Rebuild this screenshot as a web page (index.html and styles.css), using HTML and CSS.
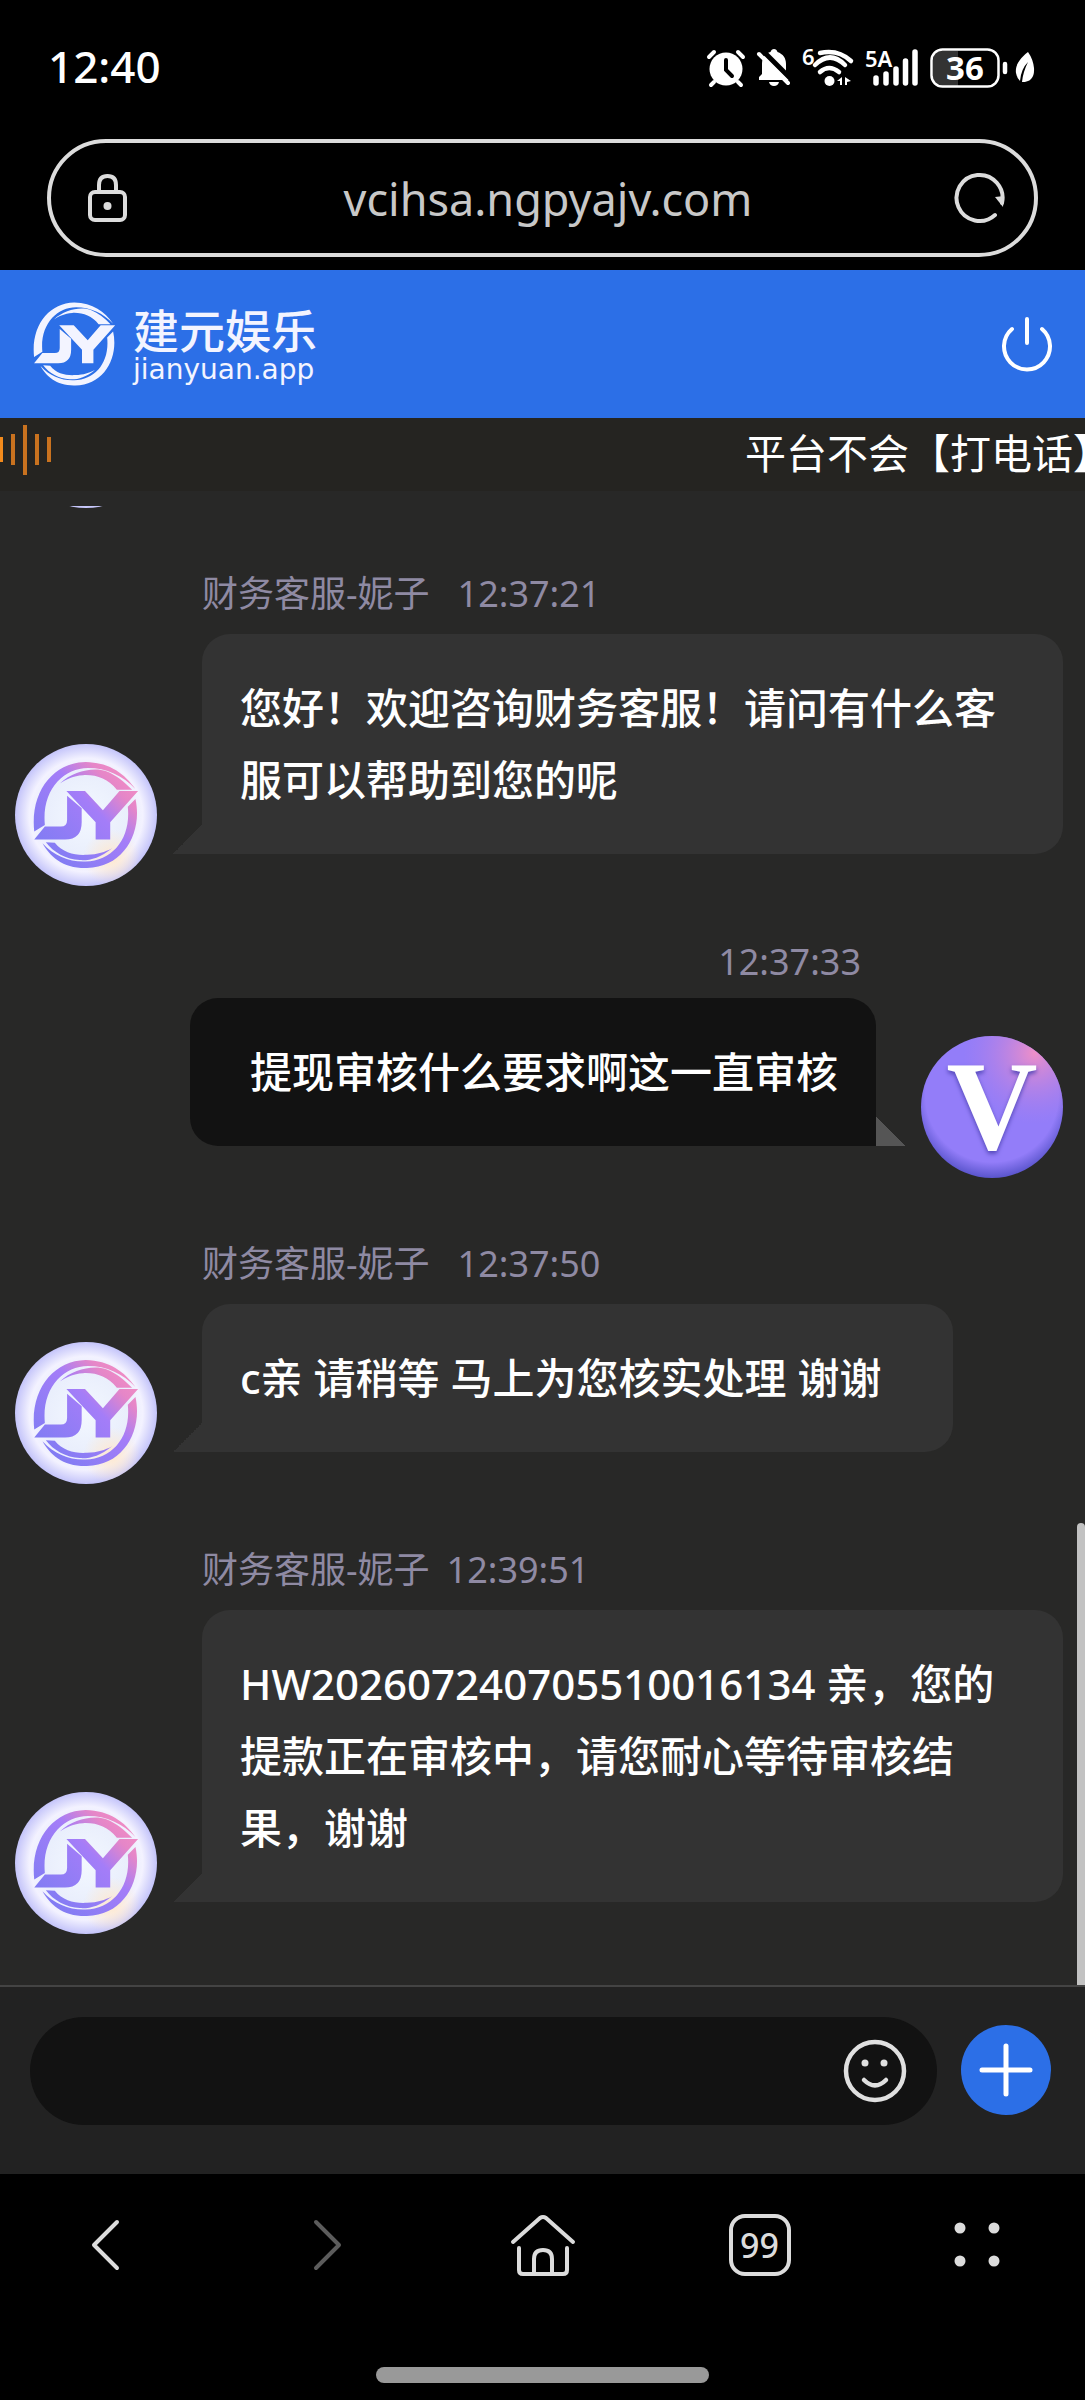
FILE: index.html
```html
<!DOCTYPE html>
<html lang="zh-CN">
<head>
<meta charset="utf-8">
<meta name="viewport" content="width=device-width, initial-scale=1">
<title>建元娱乐</title>
<link rel="stylesheet" href="styles.css">
</head>
<body>
<svg class="defs" width="0" height="0" aria-hidden="true">
  <defs>
    <linearGradient id="mark-fill" gradientUnits="userSpaceOnUse" x1="140" y1="380" x2="390" y2="140">
      <stop offset="0" stop-color="#7f7cf3"/>
      <stop offset=".6" stop-color="#a47df8"/>
      <stop offset=".85" stop-color="#e586c8"/>
      <stop offset="1" stop-color="#f08cc4"/>
    </linearGradient>
    <radialGradient id="pearl">
      <stop offset="0" stop-color="#f3f8ff"/>
      <stop offset=".6" stop-color="#e9eefc"/>
      <stop offset=".8" stop-color="#f3f2ff"/>
      <stop offset="1" stop-color="#c4c4fa"/>
    </radialGradient>
    <radialGradient id="warm" cx=".68" cy=".8" r=".2">
      <stop offset="0" stop-color="#ffe9cf"/>
      <stop offset="1" stop-color="#ffe9cf" stop-opacity="0"/>
    </radialGradient>
    <radialGradient id="violet" cx=".5" cy=".42" r=".6">
      <stop offset=".78" stop-color="#937df9"/>
      <stop offset="1" stop-color="#4f4dc4"/>
    </radialGradient>
    <radialGradient id="blush" cx=".8" cy=".12" r=".5">
      <stop offset="0" stop-color="#ee8fc8"/>
      <stop offset="1" stop-color="#b07fe8" stop-opacity="0"/>
    </radialGradient>
    <symbol id="mark" viewBox="95 82 328 336">
      <path d="M103 300C90 180 160 92 258 90c72 2 117 35 150 82-38-42-88-64-143-64-75 0-140 67-130 172z"/>
      <path d="M180 155c40-37 100-50 140-37 30 12 55 32 78 56h-46c-27-34-62-46-102-44-30 2-50 12-70 25z"/>
      <path d="M408 202c22 98-33 206-146 208-72 2-112-35-134-75 37 40 82 57 130 55 82-2 137-70 127-165z"/>
      <path d="M138 332l27 2c25 31 60 38 97 36 33-2 53-8 76-20-38 30-68 38-98 36-40-2-80-24-102-54z"/>
      <path d="M202 192l44 38v42q0 52-50 52h-93l32-39h48q19 0 19-20z"/>
      <path d="M200 178h56l54 58 50-58h56l-84 94v52h-44v-52z"/>
    </symbol>
    <symbol id="agent" viewBox="0 0 428 428">
      <circle cx="214" cy="214" r="214" fill="url(#pearl)"/>
      <circle cx="214" cy="214" r="214" fill="url(#warm)"/>
      <use href="#mark" x="50" y="46" width="328" height="336"/>
    </symbol>
  </defs>
</svg>

<div class="phone">
  <div class="status">
    <span class="clock">12:40</span>
    <div class="status-icons">
      <svg width="40" height="40" viewBox="0 0 40 40" fill="none" stroke="#fff" stroke-linecap="round">
        <circle cx="20" cy="21" r="16.500" fill="#fff" stroke="none"/>
        <path d="M3 9l5-5M37 9l-5-5M8 34l-3 3M32 34l3 3" stroke-width="4"/>
        <path d="M20 12v10l6 6" stroke="#000" stroke-width="4"/>
      </svg>
      <svg width="34" height="40" viewBox="0 0 34 40">
        <path d="M17 1c1.500 0 3 1 3.500 3C26 6 29 10 29 16v11l4 5H2v-3l3-3V16C5 9 9 5 13.500 4 14 2 15.500 1 17 1zM12 34h10q-1 4-5 4t-5-4z" fill="#fff"/>
        <path d="M5 2l29 29" stroke="#000" stroke-width="5"/>
        <path d="M2 6l29 29" stroke="#fff" stroke-width="4" stroke-linecap="round"/>
      </svg>
      <svg width="52" height="40" viewBox="0 0 52 40" fill="none" stroke="#fff" stroke-linecap="round">
        <text x="0" y="17" class="tiny">6</text>
        <path d="M18 5q18-4 31 8M13 17q15-15 30 0M18 24q9-8 19 0" stroke-width="4.500"/>
        <circle cx="27.500" cy="33" r="5" fill="#fff" stroke="none"/>
        <path d="M40 29v8h-2v-4h-3zM43 37v-8l6 4-4 1v3z" fill="#fff" stroke="none"/>
      </svg>
      <svg width="54" height="40" viewBox="0 0 54 40" fill="none" stroke="#fff" stroke-linecap="round">
        <text x="0" y="19" class="tiny">5A</text>
        <path d="M11 30v5M21 26v9M31 21v14M40.500 13v22M50 4v31" stroke-width="5.500"/>
      </svg>
      <svg width="78" height="40" viewBox="0 0 78 40">
        <path d="M12 3h16v35H12q-9 0-9-9V12q0-9 9-9z" fill="#333"/>
        <rect x="1.500" y="1.500" width="67" height="37" rx="11" fill="none" stroke="#fff" stroke-width="2.500"/>
        <path d="M75 16v8" stroke="#fff" stroke-width="4.500" stroke-linecap="round"/>
        <text x="35" y="32" text-anchor="middle" class="charge">36</text>
      </svg>
      <svg class="leaf" width="20" height="34" viewBox="0 0 20 34">
        <path d="M13 1C4 8 0 15 1 22q1 5 4 8 1-12 8-19-5 10-6 20 13 0 12-14Q18 8 13 1z" fill="#fff"/>
      </svg>
    </div>
  </div>

  <div class="address">
    <svg width="40" height="50" viewBox="0 0 40 50" fill="none" stroke="#dcdcdc" stroke-width="4">
      <rect x="2" y="19" width="35" height="28" rx="5"/>
      <path d="M11 18v-6q0-9 8.500-9T28 12v6"/>
      <circle cx="19.500" cy="33" r="4" fill="#dcdcdc" stroke="none"/>
    </svg>
    <span class="url">vcihsa.ngpyajv.com</span>
    <button class="plain" aria-label="刷新">
      <svg width="52" height="52" viewBox="0 0 52 52" fill="none" stroke="#dcdcdc" stroke-width="4">
        <path d="M41 43A23 23 0 1 1 48 31" stroke-linecap="round"/>
        <path d="M41 25l9-1-1 11z" fill="#dcdcdc" stroke="none"/>
      </svg>
    </button>
  </div>

  <header class="brand">
    <svg class="brand-mark" viewBox="95 82 328 336"><use href="#mark" x="95" y="82" width="328" height="336"/></svg>
    <div class="brand-text">
      <span class="brand-name">建元娱乐</span>
      <span class="brand-host">jianyuan.app</span>
    </div>
    <button class="plain power" aria-label="退出">
      <svg width="52" height="56" viewBox="0 0 52 56" fill="none" stroke="#fff" stroke-width="4" stroke-linecap="round">
        <path d="M11 13A23 23 0 1 0 41 13M26 3v24"/>
      </svg>
    </button>
  </header>

  <div class="notice">
    <svg width="52" height="52" viewBox="0 0 52 52" fill="#c9721f">
      <path d="M0 14h3v25H0z" fill="#f28a1c"/>
      <path d="M11 11h4v31h-4zM23 2h4v50h-4zM35 11h4v31h-4zM47 14h4v25h-4z"/>
    </svg>
    <span class="ticker">平台不会【打电话】</span>
  </div>

  <main class="chat">
    <div class="passed"><svg class="avatar"><use href="#agent"/></svg></div>

    <article class="msg">
      <p class="meta"><span>财务客服-妮子</span><time>12:37:21</time></p>
      <svg class="avatar"><use href="#agent"/></svg>
      <p class="bubble">您好！欢迎咨询财务客服！请问有什么客服可以帮助到您的呢</p>
    </article>

    <article class="msg mine">
      <p class="meta"><time>12:37:33</time></p>
      <p class="bubble">提现审核什么要求啊这一直审核</p>
      <svg class="avatar" viewBox="0 0 428 428">
        <circle cx="214" cy="214" r="214" fill="url(#violet)"/>
        <circle cx="214" cy="214" r="214" fill="url(#blush)"/>
        <text x="214" y="342" text-anchor="middle" class="initial">V</text>
      </svg>
    </article>

    <article class="msg roomy">
      <p class="meta"><span>财务客服-妮子</span><time>12:37:50</time></p>
      <svg class="avatar"><use href="#agent"/></svg>
      <p class="bubble">c亲 请稍等 马上为您核实处理 谢谢</p>
    </article>

    <article class="msg recent">
      <p class="meta"><span>财务客服-妮子</span><time>12:39:51</time></p>
      <svg class="avatar"><use href="#agent"/></svg>
      <p class="bubble">HW202607240705510016134 亲，您的提款正在审核中，请您耐心等待审核结果，谢谢</p>
    </article>
    <div class="thumb"></div>
  </main>

  <form class="composer">
    <div class="field">
      <input type="text" aria-label="消息">
      <button type="button" class="plain" aria-label="表情">
        <svg width="64" height="64" viewBox="0 0 64 64" fill="none" stroke="#e0e0e0" stroke-width="4.500" stroke-linecap="round">
          <circle cx="32" cy="32" r="29"/>
          <path d="M21 41q11 11 22 0"/>
          <circle cx="22" cy="24" r="3.500" fill="#e0e0e0" stroke="none"/>
          <circle cx="41" cy="24" r="3.500" fill="#e0e0e0" stroke="none"/>
        </svg>
      </button>
    </div>
    <button type="button" class="add" aria-label="更多">
      <svg width="54" height="54" viewBox="0 0 54 54" stroke="#fff" stroke-width="5" stroke-linecap="round"><path d="M27 3v48M3 27h48"/></svg>
    </button>
  </form>

  <nav class="toolbar">
    <button class="plain" aria-label="后退">
      <svg width="64" height="64" viewBox="0 0 64 64" fill="none" stroke="#dcdcdc" stroke-width="4" stroke-linecap="round" stroke-linejoin="round"><path d="M40 9L17 32l23 23"/></svg>
    </button>
    <button class="plain" aria-label="前进">
      <svg width="64" height="64" viewBox="0 0 64 64" fill="none" stroke="#5c5c5c" stroke-width="4" stroke-linecap="round" stroke-linejoin="round"><path d="M22 9l23 23-23 23"/></svg>
    </button>
    <button class="plain" aria-label="主页">
      <svg width="68" height="64" viewBox="0 0 68 64" fill="none" stroke="#dcdcdc" stroke-width="4" stroke-linecap="round" stroke-linejoin="round">
        <path d="M4 29L31 5q3-2 6 0l27 24"/>
        <path d="M10 35v22q0 4 4 4h40q4 0 4-4V35M25 60V46q0-9 9-9t9 9v14"/>
      </svg>
    </button>
    <button class="tabs" aria-label="标签页">99</button>
    <button class="plain" aria-label="菜单">
      <svg width="64" height="64" viewBox="0 0 64 64" fill="#dcdcdc">
        <circle cx="15" cy="15" r="5.500"/><circle cx="49" cy="15" r="5.500"/><circle cx="15" cy="48" r="5.500"/><circle cx="49" cy="48" r="5.500"/>
      </svg>
    </button>
  </nav>
  <div class="gesture"></div>
</div>
</body>
</html>
```
FILE: styles.css
```css
* {
  box-sizing: border-box;
}

body {
  margin: 0;
  background: #000;
  color: #fff;
  font-family: "Noto Sans", "Noto Sans CJK SC", sans-serif;
}

p {
  margin: 0;
}

button {
  padding: 0;
  border: 0;
  font: inherit;
  color: inherit;
}

svg {
  display: block;
  flex: none;
}

.defs {
  position: absolute;
}

.plain {
  background: none;
}

.phone {
  display: flex;
  flex-direction: column;
  min-height: 100vh;
}

/* system status */
.status {
  display: flex;
  align-items: center;
  justify-content: space-between;
  height: 136px;
  padding: 0 50px 0 48px;
}

.clock {
  padding-bottom: 4px;
  font-size: 44px;
  font-weight: 500;
}

.status-icons {
  display: flex;
  align-items: center;
  gap: 11px;
}

.status-icons svg {
  overflow: visible;
}

.status-icons .leaf {
  margin-left: -4px;
}

.tiny {
  fill: #fff;
  stroke: none;
  font: 600 22px "Noto Sans", sans-serif;
}

.charge {
  fill: #fff;
  font: 700 33px "Noto Sans", sans-serif;
}

/* browser address */
.address {
  display: flex;
  align-items: center;
  height: 118px;
  margin: 3px 47px 13px;
  padding: 0 28px 0 37px;
  border: 4px solid #dcdcdc;
  border-radius: 59px;
}

.url {
  flex: 1;
  padding-left: 14px;
  color: #c8c8c8;
  font-size: 45px;
  text-align: center;
}

/* site header */
.brand {
  display: flex;
  align-items: center;
  height: 148px;
  padding: 0 32px;
  background: #2c6fe7;
}

.brand-mark {
  width: 85px;
  height: 88px;
  fill: #f3f4ff;
}

.brand-text {
  display: flex;
  flex-direction: column;
  margin-left: 16px;
}

.brand-name {
  font: 500 46px/52px "Noto Sans CJK SC", sans-serif;
  color: #f3f4ff;
}

.brand-host {
  font: 28px/32px "DejaVu Sans", sans-serif;
  color: #f3f4ff;
}

.power {
  margin-left: auto;
}

.notice {
  display: flex;
  justify-content: space-between;
  height: 73px;
  padding-top: 5px;
  background: #252421;
  overflow: hidden;
}

.ticker {
  flex: none;
  width: 340px;
  font-size: 41px;
  line-height: 60px;
  white-space: nowrap;
}

/* conversation */
.chat {
  position: relative;
  flex: 1;
  padding: 15px 22px 48px 15px;
  background: #282827;
}

.passed {
  display: flex;
  align-items: flex-end;
  height: 2px;
  overflow: hidden;
}

.avatar {
  width: 142px;
  height: 142px;
  fill: url(#mark-fill);
}

.msg {
  display: grid;
  grid-template-columns: 142px 1fr;
  column-gap: 45px;
  align-items: end;
  justify-items: start;
  padding-top: 60px;
}

.meta {
  grid-column: 2;
  display: flex;
  gap: 28px;
  margin-bottom: 14px;
  color: #8f8aa3;
  font-size: 36px;
  line-height: 52px;
}

.recent .meta {
  gap: 17px;
}

.bubble {
  position: relative;
  margin-bottom: 32px;
  padding: 38px;
  border-radius: 28px 28px 28px 0;
  background: #333;
  font-size: 42px;
  font-weight: 500;
  line-height: 72px;
}

.roomy .bubble {
  padding-right: 72px;
}

.bubble::before {
  content: "";
  position: absolute;
  right: 100%;
  bottom: 0;
  border: solid transparent;
  border-width: 29px 0 0 29px;
  width: 0;
  background: linear-gradient(135deg, transparent 50%, #333 50%) border-box;
}

.mine {
  grid-template-columns: 1fr 142px;
  justify-items: end;
  padding-top: 50px;
}

.mine .meta {
  grid-column: 1;
  margin-right: 15px;
  margin-bottom: 10px;
}

.mine .bubble {
  grid-column: 1;
  padding-left: 60px;
  border-radius: 28px 28px 0 28px;
  background: #121212;
}

.mine .bubble::before {
  right: auto;
  left: 100%;
  background: linear-gradient(225deg, transparent 50%, #555 50%) border-box;
}

.initial {
  fill: #fff;
  font: 700 380px "Liberation Serif", serif;
  filter: drop-shadow(0 8px 6px #5247b8);
}

.thumb {
  position: absolute;
  right: 0;
  bottom: 0;
  width: 8px;
  height: 462px;
  border-radius: 4px 4px 0 0;
  background: #c2c2c2;
}

/* message entry */
.composer {
  display: flex;
  align-items: flex-start;
  gap: 24px;
  height: 189px;
  padding: 30px 34px 0 30px;
  border-top: 2px solid #444;
  background: #222;
}

.field {
  display: flex;
  flex: 1;
  align-items: center;
  height: 108px;
  padding: 0 30px 0 40px;
  border-radius: 54px;
  background: #121212;
}

.field input {
  flex: 1;
  min-width: 0;
  border: 0;
  outline: 0;
  background: none;
  color: #fff;
  font: inherit;
  font-size: 42px;
}

.add {
  display: grid;
  place-items: center;
  width: 90px;
  height: 90px;
  margin-top: 8px;
  border-radius: 50%;
  background: #2c6fe7;
}

/* browser toolbar */
.toolbar {
  display: grid;
  grid-template-columns: repeat(5, 1fr);
  place-items: center;
  height: 142px;
}

.tabs {
  width: 62px;
  height: 62px;
  border: 4px solid #dcdcdc;
  border-radius: 16px;
  background: none;
  color: #dcdcdc;
  font-size: 34px;
  font-weight: 500;
  line-height: 54px;
}

.gesture {
  width: 333px;
  height: 16px;
  margin: 51px auto 17px;
  border-radius: 8px;
  background: #999;
}
```
